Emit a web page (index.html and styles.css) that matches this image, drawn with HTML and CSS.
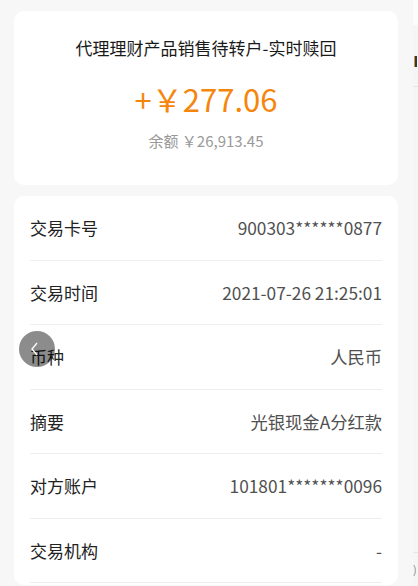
FILE: index.html
```html
<!DOCTYPE html>
<html lang="zh-CN">
<head>
  <meta charset="UTF-8" />
  <meta name="viewport" content="width=device-width, initial-scale=1.0"/>
  <title>交易详情</title>
  <link rel="stylesheet" href="styles.css">
</head>
<body>
  <div class="screen">
    <div class="page">
      <div class="card summary">
        <h2 class="title">代理理财产品销售待转户-实时赎回</h2>
        <div class="amount">+￥277.06</div>
        <div class="balance">余额 ￥26,913.45</div>
      </div>
      <div class="card detail">
        <div class="row">
          <span class="label">交易卡号</span>
          <span class="value">900303******0877</span>
        </div>
        <div class="row">
          <span class="label">交易时间</span>
          <span class="value">2021-07-26 21:25:01</span>
        </div>
        <div class="row">
          <span class="label">币种</span>
          <span class="value">人民币</span>
        </div>
        <div class="row">
          <span class="label">摘要</span>
          <span class="value">光银现金A分红款</span>
        </div>
        <div class="row">
          <span class="label">对方账户</span>
          <span class="value">101801*******0096</span>
        </div>
        <div class="row">
          <span class="label">交易机构</span>
          <span class="value">-</span>
        </div>
      </div>
    </div>
    <div class="peek">
      <div class="peek-top"></div>
      <div class="peek-bar"><span class="peek-mark"></span></div>
      <div class="peek-fill"></div>
      <div class="peek-foot">)</div>
    </div>
  </div>
  <button class="back" aria-label="返回">
    <svg width="12" height="14" viewBox="0 0 12 14"><path d="M8 1 L3 7 L8 13" fill="none" stroke="#fff" stroke-width="1.3"/></svg>
  </button>
</body>
</html>
```

FILE: styles.css
```css
* {
  box-sizing: border-box;
  margin: 0;
  padding: 0;
}
body {
  font-family: "Noto Sans CJK SC", "Noto Sans", sans-serif;
  background: #f7f7f7;
  color: #222;
  height: 586px;
  overflow: hidden;
}
.screen {
  display: flex;
  height: 586px;
}
.page {
  width: 413px;
  padding: 11px 15px 0 14px;
  display: flex;
  flex-direction: column;
  gap: 11px;
}
.card {
  background: #fff;
  border-radius: 10px;
}
.summary {
  height: 174px;
  padding-top: 25px;
  text-align: center;
}
.title {
  font-size: 17px;
  font-weight: normal;
  line-height: 24px;
  color: #1a1a1a;
}
.amount {
  margin-top: 20px;
  font-size: 31px;
  line-height: 38px;
  color: #f5860c;
}
.balance {
  margin-top: 13px;
  font-size: 15px;
  line-height: 20px;
  color: #999;
}
.detail {
  padding: 0 16px;
  height: 389px;
}
.row {
  display: flex;
  justify-content: space-between;
  align-items: center;
  height: 64.5px;
  border-bottom: 1px solid #eee;
  font-size: 17px;
}
.label {
  color: #222;
}
.value {
  font-size: 17.3px;
  color: #505050;
}
.peek {
  flex: 1;
  display: flex;
  flex-direction: column;
  background: #f5f5f5;
}
.peek-top {
  height: 25px;
  background: #fcfcfc;
}
.peek-bar {
  height: 62px;
  border-bottom: 1px solid #e6e6e6;
  padding-top: 31px;
}
.peek-mark {
  display: block;
  width: 3px;
  height: 11px;
  margin-left: 1px;
  background: #2a3a4a;
  border-left: 1px solid #d9902a;
}
.peek-fill {
  flex: 1;
  border-bottom: 1px solid #e6e6e6;
}
.peek-foot {
  height: 33px;
  font-size: 11px;
  color: #888;
  padding-top: 8px;
}
.back {
  position: fixed;
  left: 19px;
  top: 331px;
  width: 36px;
  height: 36px;
  border: none;
  border-radius: 50%;
  background: rgba(0, 0, 0, 0.45);
  display: flex;
  align-items: center;
  justify-content: center;
  padding-right: 4px;
}
```
